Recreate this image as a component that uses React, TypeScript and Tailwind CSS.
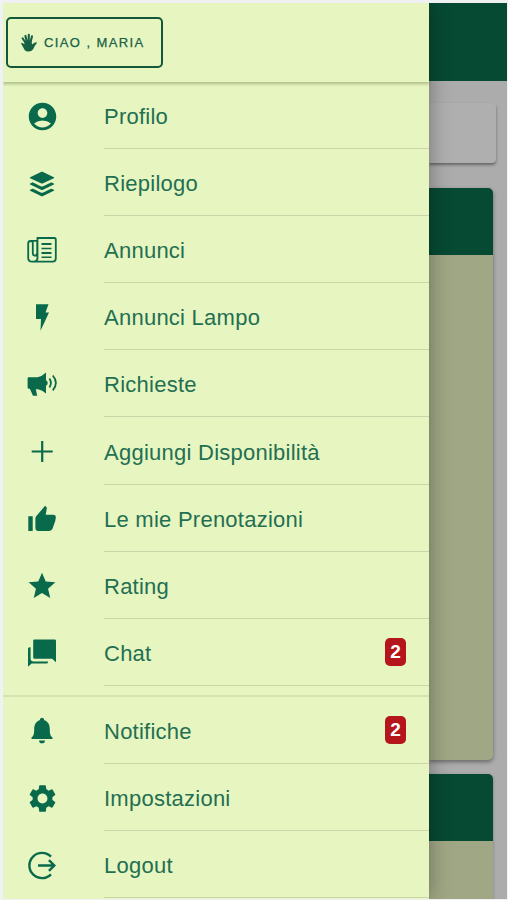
import React from "react";
import { MdAccountCircle, MdSettings, MdStar } from "react-icons/md";
import { IoLogoBuffer } from "react-icons/io5";

const BoltIcon = () => (
  <svg viewBox="0 0 30 30" className="w-[30px] h-[30px]" fill="currentColor">
    <path d="M9 1.2H21.5L18.5 9.5H22L13.5 27.8L14 16H9Z" />
  </svg>
);

const NewspaperIcon = () => (
  <svg
    viewBox="0 0 30 30"
    className="w-[30px] h-[30px]"
    fill="none"
    stroke="currentColor"
  >
    <path
      strokeWidth="1.8"
      d="M10.5 23V2H27.2Q28.8 2 28.8 3.6V22.5Q28.8 25.7 25.6 25.7H5.2Q1.2 25.7 1.2 21.7V7.5Q1.2 5 3.7 5Q5.8 5 5.8 7V17Q5.8 19.6 7.8 19.6Q10.2 19.6 10.2 17V4.9H4M10.5 21.5Q10.5 25.4 7 25.5"
    />
    <path strokeWidth="2" d="M14.5 8H24.5M14.5 17H24.5" />
    <path strokeWidth="1.5" d="M14.5 12.5H24.5M14.5 21.3H24.5" />
  </svg>
);

const MegaphoneIcon = () => (
  <svg viewBox="0 0 30 30" className="w-[30px] h-[30px]" fill="currentColor">
    <path d="M.6 8.2Q.6 7.3 1.6 7.3H10.5Q15 6.5 19 2.5V10.2Q20.7 10.8 20.7 13T19 15.8V23.5Q15.5 20 11 19.2H8.8L10.2 25.8H6L2.8 18.7H1.6Q.6 18.7.6 17.6Z" />
    <path
      fill="none"
      stroke="currentColor"
      strokeWidth="1.8"
      d="M22.4 8.5Q25.4 13 22.4 17.5M25.8 5.5Q32 12.8 25.8 20.4"
    />
  </svg>
);

const PlusIcon = () => (
  <svg
    viewBox="0 0 30 30"
    className="w-[30px] h-[30px]"
    fill="none"
    stroke="currentColor"
    strokeWidth="2.2"
  >
    <path d="M15.2 4V25M4.7 14.5H25.7" />
  </svg>
);

const ThumbIcon = () => (
  <svg viewBox="0 0 30 30" className="w-[30px] h-[30px]" fill="currentColor">
    <path d="M1.3 12.3H5.7V27H1.3ZM8.4 14.2Q8.4 13 9.2 12.2L18.1 1.8L19.5 3.2Q20 3.8 19.8 4.6L18.7 10.8H26.2Q29.2 10.8 28.8 13.6L28.3 16.7L25.5 24.8Q24.7 26.9 22.2 26.9H11.2Q8.4 26.9 8.4 24.1Z" />
  </svg>
);

const ChatIcon = () => (
  <svg viewBox="0 0 30 30" className="w-[30px] h-[30px]" fill="currentColor">
    <path d="M7.6 1.4H27.6Q29 1.4 29 2.8V24.3L25.2 20.8H7.6Q6.2 20.8 6.2 19.4V2.8Q6.2 1.4 7.6 1.4Z" />
    <path d="M2.6 9.2H3.6V20.5Q3.6 23.4 6.5 23.4H21V24Q21 25.6 19.4 25.6H4.6L1 28.8V10.8Q1 9.2 2.6 9.2Z" />
  </svg>
);

const BellIcon = () => (
  <svg viewBox="0 0 30 30" className="w-[30px] h-[30px]" fill="currentColor">
    <path d="M12.7 4.2Q12.8 1.7 15 1.7T17.3 4.2C21.5 5.5 22.8 9.3 22.8 13.5C22.8 18.6 23.8 20.4 25.5 21.4V23H4.5V21.4C6.2 20.4 7.2 18.6 7.2 13.5C7.2 9.3 8.5 5.5 12.7 4.2ZM12 24.4H18Q17.7 27.3 15 27.3T12 24.4Z" />
  </svg>
);

const LogoutIcon = () => (
  <svg
    viewBox="0 0 30 30"
    className="w-[30px] h-[30px]"
    fill="none"
    stroke="currentColor"
    strokeWidth="2.4"
  >
    <path d="M24 5.7A12.6 12.6 0 1 0 24 23.3M11 14.5H27M21.9 9.1L27.3 14.5L21.9 19.9" />
  </svg>
);

const HandIcon = () => (
  <svg
    viewBox="0 0 18 20"
    className="w-[18px] h-[20px]"
    fill="none"
    stroke="currentColor"
    strokeLinecap="round"
  >
    <path
      strokeWidth="2.1"
      d="M6 10.5L2.6 5.3M7.2 10L5.4 2.9M8.7 10L8.8 1.8M10.2 10.5L12 3.3"
    />
    <path
      fill="currentColor"
      stroke="none"
      d="M4.7 8.4L11.3 8L12 11.6L14.5 9.8Q16.5 8.8 17 9.7Q14.8 12.4 13.5 15.6Q12 18.6 8.8 18.6Q4.8 18.6 3.7 15.2L1.2 10.8Q.9 9.5 2.4 9.9L4.5 11.2Z"
    />
  </svg>
);

type MenuItem = {
  label: string;
  icon: React.ReactNode;
  badge?: number;
};

const mainItems: MenuItem[] = [
  { label: "Profilo", icon: <MdAccountCircle size={33} /> },
  { label: "Riepilogo", icon: <IoLogoBuffer size={28} /> },
  { label: "Annunci", icon: <NewspaperIcon /> },
  { label: "Annunci Lampo", icon: <BoltIcon /> },
  { label: "Richieste", icon: <MegaphoneIcon /> },
  { label: "Aggiungi Disponibilità", icon: <PlusIcon /> },
  { label: "Le mie Prenotazioni", icon: <ThumbIcon /> },
  { label: "Rating", icon: <MdStar size={32} /> },
  { label: "Chat", icon: <ChatIcon />, badge: 2 },
];

const bottomItems: MenuItem[] = [
  { label: "Notifiche", icon: <BellIcon />, badge: 2 },
  { label: "Impostazioni", icon: <MdSettings size={33} /> },
  { label: "Logout", icon: <LogoutIcon /> },
];

const MenuRow: React.FC<{ item: MenuItem }> = ({ item }) => (
  <li className="flex h-[67.1px] shrink-0 text-[#08694b]">
    <div className="flex items-center justify-center w-[78px] mr-[23px] pt-[2px]">
      {item.icon}
    </div>
    <div className="flex items-center justify-between flex-1 border-b border-[#cad6a9] pr-[23px] pt-[3px]">
      <span className="text-[22px] tracking-[0.25px] whitespace-nowrap text-[#236f51]">
        {item.label}
      </span>
      {item.badge && (
        <span className="flex items-center justify-center w-[21px] h-[28px] -mt-[2px] rounded-[5px] bg-[#b4161b] text-[19px] font-bold text-white">
          {item.badge}
        </span>
      )}
    </div>
  </li>
);

const SideMenu = () => (
  <aside className="relative z-10 flex flex-col w-[426px] shrink-0 bg-[#e7f5c1] shadow-[0_0_20px_rgba(0,0,0,0.35)]">
    <header className="relative h-[79px] shrink-0 px-[3px] pt-[14px] shadow-[0_2px_3px_rgba(60,80,20,0.35)]">
      <button className="flex items-center w-[157px] h-[51px] pl-[12px] border-2 border-[#14583b] rounded-[5px] text-[#176044]">
        <HandIcon />
        <span className="ml-[6px] pt-[1px] text-[13px] tracking-[1.4px] whitespace-nowrap [-webkit-text-stroke:0.25px]">
          CIAO , MARIA
        </span>
      </button>
    </header>
    <ul>
      {mainItems.map((item) => (
        <MenuRow key={item.label} item={item} />
      ))}
    </ul>
    <ul className="mt-[9px] border-t-2 border-[#d5e2b4]">
      {bottomItems.map((item) => (
        <MenuRow key={item.label} item={item} />
      ))}
    </ul>
  </aside>
);

// Dimmed page that stays visible behind the open menu
const PageBehind = () => (
  <main className="flex-1 overflow-hidden bg-[#acacac]">
    <div className="h-[78px] bg-[#064a34]" />
    <div className="h-[60px] mt-[22px] mr-[11px] rounded-br-[4px] rounded-tr-[4px] bg-[#afafaf] shadow-[0_2px_3px_rgba(0,0,0,0.4)]" />
    <div className="h-[572px] mt-[25px] mr-[14px] overflow-hidden rounded-r-[5px] bg-[#a0a784] shadow-[0_2px_4px_rgba(0,0,0,0.4)]">
      <div className="h-[67px] bg-[#064a34]" />
    </div>
    <div className="h-[140px] mt-[14px] mr-[14px] overflow-hidden rounded-tr-[5px] bg-[#a0a784] shadow-[0_1px_3px_rgba(0,0,0,0.3)]">
      <div className="h-[67px] bg-[#064a34]" />
    </div>
  </main>
);

const App = () => {
  return (
    <div className="w-[508px] h-[900px] overflow-hidden bg-[#eff1f3] pt-[3px] pl-[3px] pr-[1px] pb-[1px] font-['Liberation_Sans',Arial,sans-serif]">
      <div className="flex h-full overflow-hidden">
        <SideMenu />
        <PageBehind />
      </div>
    </div>
  );
};

export default App;
